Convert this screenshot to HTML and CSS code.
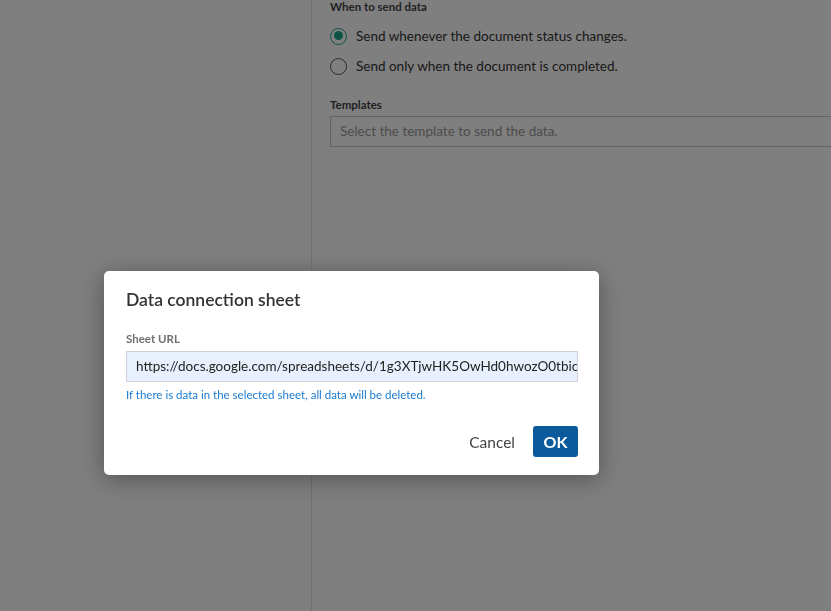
FILE: index.html
```html
<!DOCTYPE html>
<html lang="en">
<head>
<meta charset="utf-8">
<title>Data connection sheet</title>
<link rel="stylesheet" href="styles.css">
</head>
<body>
<div class="page">
  <aside class="sidebar"></aside>
  <main class="content">
    <div class="field-label">When to send data</div>
    <div class="radios">
      <label class="radio"><span class="dot checked"></span>Send whenever the document status changes.</label>
      <label class="radio"><span class="dot"></span>Send only when the document is completed.</label>
    </div>
    <div class="field-label templates-label">Templates</div>
    <div class="select">Select the template to send the data.</div>
  </main>
</div>
<div class="overlay"></div>
<div class="dialog">
  <h2 class="dialog-title">Data connection sheet</h2>
  <div class="dialog-label">Sheet URL</div>
  <div class="url-input">https://docs.google.com/spreadsheets/d/1g3XTjwHK5OwHd0hwozO0tbic</div>
  <div class="hint">If there is data in the selected sheet, all data will be deleted.</div>
  <div class="actions">
    <button class="btn-cancel">Cancel</button>
    <button class="btn-ok">OK</button>
  </div>
</div>
</body>
</html>
```
FILE: styles.css
```css
* { box-sizing: border-box; }
html, body { margin: 0; padding: 0; height: 100%; }
body {
  font-family: Lato, "Noto Sans", sans-serif;
  color: #333;
  background: #fff;
  overflow: hidden;
}
.page {
  display: flex;
  height: 611px;
}
.sidebar {
  width: 312px;
  flex: none;
  border-right: 1px solid #e4e4e4;
}
.content {
  flex: 1;
  padding: 0 0 0 18px;
  margin-right: -40px;
}
.field-label {
  font-size: 11.5px;
  font-weight: 700;
  color: #444;
  line-height: 14px;
  margin-top: 0;
}
.radios {
  display: flex;
  flex-direction: column;
  gap: 12px;
  margin-top: 13px;
}
.radio {
  display: flex;
  align-items: center;
  gap: 9px;
  font-size: 13.5px;
  line-height: 18px;
  color: #333;
}
.dot {
  width: 17px;
  height: 17px;
  border-radius: 50%;
  border: 1px solid #555;
  display: inline-block;
  position: relative;
  flex: none;
}
.dot.checked {
  border: 1.5px solid #1aa68c;
}
.dot.checked::after {
  content: "";
  position: absolute;
  left: 2.5px; top: 2.5px;
  width: 9px; height: 9px;
  border-radius: 50%;
  background: #1aa68c;
}
.templates-label { margin-top: 23px; }
.select {
  margin-top: 4px;
  height: 31px;
  border: 1px solid #c8c8c8;
  padding: 0 9px;
  font-size: 13.5px;
  line-height: 29px;
  color: #999;
}
.overlay {
  position: fixed;
  inset: 0;
  background: rgba(0,0,0,0.5);
}
.dialog {
  position: absolute;
  left: 104px;
  top: 271px;
  width: 495px;
  height: 204px;
  background: #fff;
  border-radius: 5px;
  box-shadow: 0 4px 24px rgba(0,0,0,0.35);
  padding: 17px 21px 18px 22px;
  display: flex;
  flex-direction: column;
}
.dialog-title {
  margin: 0;
  font-size: 17.5px;
  font-weight: 600;
  line-height: 24px;
  color: #333;
}
.dialog-label {
  margin-top: 20px;
  font-size: 11.5px;
  font-weight: 700;
  line-height: 14px;
  color: #6f6f6f;
}
.url-input {
  margin-top: 5px;
  height: 31px;
  background: #e8f0fe;
  border: 1px solid #cfd3d8;
  padding: 0 0 0 9px;
  font-size: 13.5px;
  line-height: 29px;
  color: #222;
  white-space: nowrap;
  overflow: hidden;
}
.hint {
  margin-top: 6px;
  font-size: 11.5px;
  line-height: 14px;
  color: #1a7bd0;
}
.actions {
  margin-top: auto;
  display: flex;
  justify-content: flex-end;
  align-items: center;
  gap: 18px;
}
.btn-cancel {
  background: none;
  border: none;
  font-family: inherit;
  font-size: 15.5px;
  color: #444;
  padding: 0;
  cursor: pointer;
}
.btn-ok {
  width: 45px;
  height: 31px;
  background: #0b5a9c;
  color: #fff;
  border: none;
  border-radius: 3px;
  font-family: inherit;
  font-size: 16px;
  font-weight: 700;
  cursor: pointer;
}
```
